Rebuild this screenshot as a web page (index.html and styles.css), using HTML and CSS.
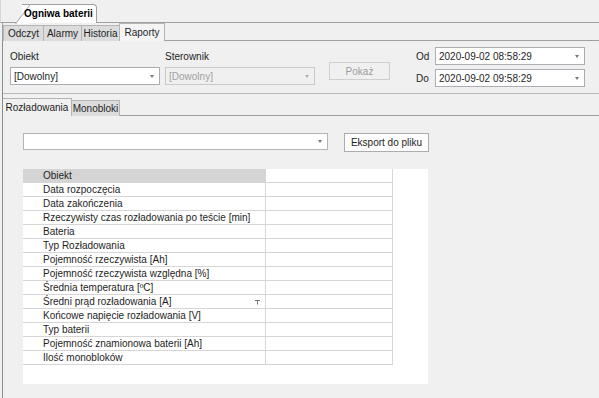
FILE: index.html
```html
<!DOCTYPE html>
<html lang="pl">
<head>
  <meta charset="UTF-8" />
  <title>Ogniwa baterii</title>
  <link rel="stylesheet" href="styles.css">
</head>
<body>
  <div class="doc-strip">
    <div class="doc-tab"><span>Ogniwa baterii</span></div>
  </div>

  <div class="page-tabs">
    <div class="ptab w-odczyt">Odczyt</div>
    <div class="ptab w-alarmy">Alarmy</div>
    <div class="ptab w-historia">Historia</div>
    <div class="ptab active">Raporty</div>
    <div class="tab-fill"></div>
  </div>

  <div class="panel">
    <div class="filters">
      <div class="field">
        <label>Obiekt</label>
        <div class="combo"><span>[Dowolny]</span><i class="arrow"></i></div>
      </div>
      <div class="field">
        <label>Sterownik</label>
        <div class="combo disabled"><span>[Dowolny]</span><i class="arrow"></i></div>
      </div>
      <button class="btn show" disabled>Pokaż</button>
      <div class="dates">
        <div class="date-row">
          <label>Od</label>
          <div class="combo date"><span>2020-09-02 08:58:29</span><i class="arrow"></i></div>
        </div>
        <div class="date-row">
          <label>Do</label>
          <div class="combo date"><span>2020-09-02 09:58:29</span><i class="arrow"></i></div>
        </div>
      </div>
    </div>

    <div class="sub-tabs">
      <div class="stab active">Rozładowania</div>
      <div class="stab w-mono">Monobloki</div>
      <div class="tab-fill"></div>
    </div>

    <div class="report">
      <div class="toolbar">
        <div class="combo wide"><span></span><i class="arrow"></i></div>
        <button class="btn export">Eksport do pliku</button>
      </div>

      <div class="grid-area">
        <table class="grid">
          <tr class="head"><td>Obiekt</td><td></td></tr>
          <tr><td>Data rozpoczęcia</td><td></td></tr>
          <tr><td>Data zakończenia</td><td></td></tr>
          <tr><td>Rzeczywisty czas rozładowania po teście [min]</td><td></td></tr>
          <tr><td>Bateria</td><td></td></tr>
          <tr><td>Typ Rozładowania</td><td></td></tr>
          <tr><td>Pojemność rzeczywista [Ah]</td><td></td></tr>
          <tr><td>Pojemność rzeczywista względna [%]</td><td></td></tr>
          <tr><td>Średnia temperatura [ºC]</td><td></td></tr>
          <tr><td class="has-filter">Średni prąd rozładowania [A]
            <svg class="funnel" width="5" height="5" viewBox="0 0 5 5"><path d="M0 0.5h5M2.5 0.5v4" stroke="#777" stroke-width="1"/></svg>
          </td><td></td></tr>
          <tr><td>Końcowe napięcie rozładowania [V]</td><td></td></tr>
          <tr><td>Typ baterii</td><td></td></tr>
          <tr><td>Pojemność znamionowa baterii [Ah]</td><td></td></tr>
          <tr><td>Ilość monobloków</td><td></td></tr>
        </table>
      </div>
    </div>
  </div>
</body>
</html>
```

FILE: styles.css
```css
html, body {
  margin: 0;
  height: 100%;
  overflow: hidden;
}

body {
  background: #f0f0f0;
  font-family: "Liberation Sans", Arial, sans-serif;
  font-size: 10px;
  color: #1e1e1e;
  width: 599px;
  height: 398px;
}

/* document tab strip */
.doc-strip { height: 18px; padding: 4px 0 0 21px; border-bottom: 1px solid #a0a0a0; border-left: 1px solid #d8d8d8; }
.doc-tab {
  position: relative;
  display: inline-block;
  width: 75px;
  height: 19px;
  line-height: 18px;
  padding: 0 0 0 2px;
  box-sizing: border-box;
  margin-bottom: -1px;
  background: #fff;
  border: 1px solid #a0a0a0;
  border-left: none;
  border-bottom: none;
  border-radius: 0 4px 0 0;
  font-weight: bold;
  font-size: 10px;
  white-space: nowrap;
  color: #000;
}
.doc-tab::before {
  content: "";
  position: absolute;
  left: -7px;
  top: -1px;
  width: 12px;
  height: 19px;
  background: #fff;
  border-left: 1px solid #a0a0a0;
  border-top: 1px solid #a0a0a0;
  transform: skewX(-37deg);
  transform-origin: bottom left;
}
.doc-tab span { position: relative; }

/* page tabs */
.page-tabs { display: flex; align-items: flex-end; height: 18px; margin-left: 2px; border-left: 1px solid #a0a0a0; }
.ptab {
  height: 16px;
  line-height: 16px;
  box-sizing: border-box;
  text-align: center;
  background: #dcdcdc;
  border: 1px solid #b4b4b4;
  border-bottom: none;
  margin-right: -1px;
}
.w-odczyt { width: 41px; }
.w-alarmy { width: 39px; }
.w-historia { width: 39px; }
.ptab.active { width: 46px; height: 18px; line-height: 17px; background: #f4f4f4; }
.tab-fill { flex: 1; border-bottom: 1px solid #a0a0a0; align-self: stretch; }

/* panel */
.panel { margin-left: 2px; border-left: 1px solid #8c8c8c; height: 358px; }

.filters { display: flex; align-items: flex-start; padding: 6px 0 0 7px; height: 46px; border-bottom: 1px solid #b9b9b9; }
.field { display: flex; flex-direction: column; width: 150px; margin-right: 5px; padding-top: 4px; }
.field label { height: 12px; line-height: 12px; margin-bottom: 4px; }

.combo {
  display: flex;
  align-items: center;
  height: 18px;
  box-sizing: border-box;
  border: 1px solid #abadb3;
  background: #fff;
  padding: 0 3px;
}
.combo span { flex: 1; white-space: nowrap; overflow: hidden; }
.combo .arrow { width: 0; height: 0; border-left: 2.5px solid transparent; border-right: 2.5px solid transparent; border-top: 3px solid #777; margin-right: 2px; }
.combo.disabled { background: #f0f0f0; border-color: #c8c8c8; color: #a0a0a0; }
.combo.disabled .arrow { border-top-color: #b0b0b0; }

.btn {
  font: inherit;
  color: #1e1e1e;
  background: #f9f9f9;
  border: 1px solid #adadad;
  padding: 0;
  box-sizing: border-box;
}
.btn.show { width: 61px; height: 18px; margin: 15px 0 0 9px; color: #9c9c9c; border-color: #cfcfcf; background: #f0f0f0; }

.dates { margin-left: 26px; display: flex; flex-direction: column; gap: 4px; }
.date-row { display: flex; align-items: center; }
.date-row label { width: 19px; }
.combo.date { width: 150px; }

/* sub tabs */
.sub-tabs { display: flex; align-items: flex-end; height: 20px; margin-top: 2px; }
.stab {
  height: 16px;
  line-height: 16px;
  box-sizing: border-box;
  text-align: center;
  background: #dcdcdc;
  border: 1px solid #b4b4b4;
  border-bottom: none;
}
.stab.active { width: 69px; height: 18px; line-height: 17px; background: #f0f0f0; border-left: none; margin-right: -1px; }
.w-mono { width: 49px; }

.report { padding: 17px 0 0 20px; }
.toolbar { display: flex; align-items: flex-start; }
.combo.wide { width: 305px; height: 17px; border-color: #b4b4b4; }
.btn.export { width: 85px; height: 19px; margin-left: 16px; border-color: #adadad; background: #fdfdfd; }

.grid-area { width: 405px; height: 215px; background: #fff; margin-top: 17px; }
.grid { border-collapse: collapse; width: 370px; }
.grid td {
  height: 13px;
  padding: 0 0 0 20px;
  border: 1px solid #d6d6d6;
  line-height: 13px;
  white-space: nowrap;
}
.grid td:first-child { width: 222px; border-left: none; }
.grid td:last-child { width: 128px; padding: 0; }
.grid tr:first-child td { border-top: none; }
.grid .head td:first-child { background: #d4d4d4; }
.has-filter { position: relative; }
.funnel { position: absolute; right: 5px; top: 5px; }
```
